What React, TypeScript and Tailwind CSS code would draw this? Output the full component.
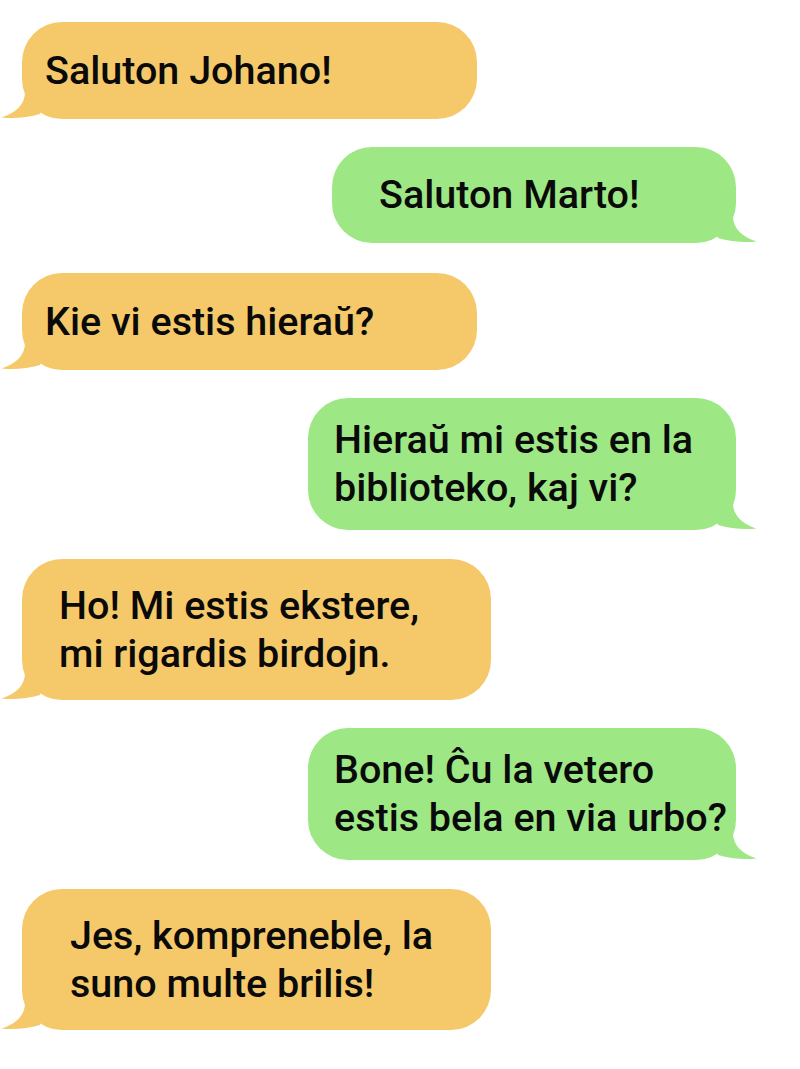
import React from "react";

type Msg = {
  side: "left" | "right";
  lines: string[];
  w: string;
  h: string;
  pl: string;
  mt: string;
};

function Tail({ side, color }: { side: "left" | "right"; color: string }) {
  const pos =
    side === "left"
      ? "absolute left-[-22px] bottom-0"
      : "absolute right-[-22px] bottom-0 -scale-x-100";
  return (
    <svg className={pos} width="70" height="30" viewBox="0 0 70 30" aria-hidden>
      <path
        d="M 25 2 C 25.5 15, 16 24, 1.5 28.5 C 14 30, 28 28.5, 40 25 L 46 2 Z"
        fill={color}
      />
    </svg>
  );
}

function Bubble({ m }: { m: Msg }) {
  const isLeft = m.side === "left";
  const color = isLeft ? "#F5C96A" : "#9DE885";
  return (
    <div className={`flex ${isLeft ? "justify-start pl-[22px]" : "justify-end pr-[64px]"} ${m.mt}`}>
      <div
        className={`relative flex items-center rounded-[40px] ${m.w} ${m.h} ${m.pl} ${
          isLeft ? "bg-[#F5C96A]" : "bg-[#9DE885]"
        }`}
      >
        <Tail side={m.side} color={color} />
        <div className="relative text-[39.5px] leading-[48px] font-medium text-[#0a0a0a]">
          {m.lines.map((l, i) => (
            <div key={i} className="whitespace-nowrap">
              {l}
            </div>
          ))}
        </div>
      </div>
    </div>
  );
}

export default function App() {
  const msgs: Msg[] = [
    { side: "left", lines: ["Saluton Johano!"], w: "w-[455px]", h: "h-[97px]", pl: "pl-[23px]", mt: "mt-[22px]" },
    { side: "right", lines: ["Saluton Marto!"], w: "w-[404px]", h: "h-[96px]", pl: "pl-[47px]", mt: "mt-[28px]" },
    { side: "left", lines: ["Kie vi estis hieraŭ?"], w: "w-[455px]", h: "h-[97px]", pl: "pl-[23px]", mt: "mt-[30px]" },
    { side: "right", lines: ["Hieraŭ mi estis en la", "biblioteko, kaj vi?"], w: "w-[428px]", h: "h-[132px]", pl: "pl-[26px]", mt: "mt-[28px]" },
    { side: "left", lines: ["Ho! Mi estis ekstere,", "mi rigardis birdojn."], w: "w-[469px]", h: "h-[141px]", pl: "pl-[37px]", mt: "mt-[29px]" },
    { side: "right", lines: ["Bone! Ĉu la vetero", "estis bela en via urbo?"], w: "w-[428px]", h: "h-[132px]", pl: "pl-[26px]", mt: "mt-[28px]" },
    { side: "left", lines: ["Jes, kompreneble, la", "suno multe brilis!"], w: "w-[469px]", h: "h-[141px]", pl: "pl-[48px]", mt: "mt-[29px]" },
  ];
  return (
    <div className="w-[800px] h-[1069px] bg-white font-['Roboto',sans-serif] flex flex-col">
      {msgs.map((m, i) => (
        <Bubble key={i} m={m} />
      ))}
    </div>
  );
}
